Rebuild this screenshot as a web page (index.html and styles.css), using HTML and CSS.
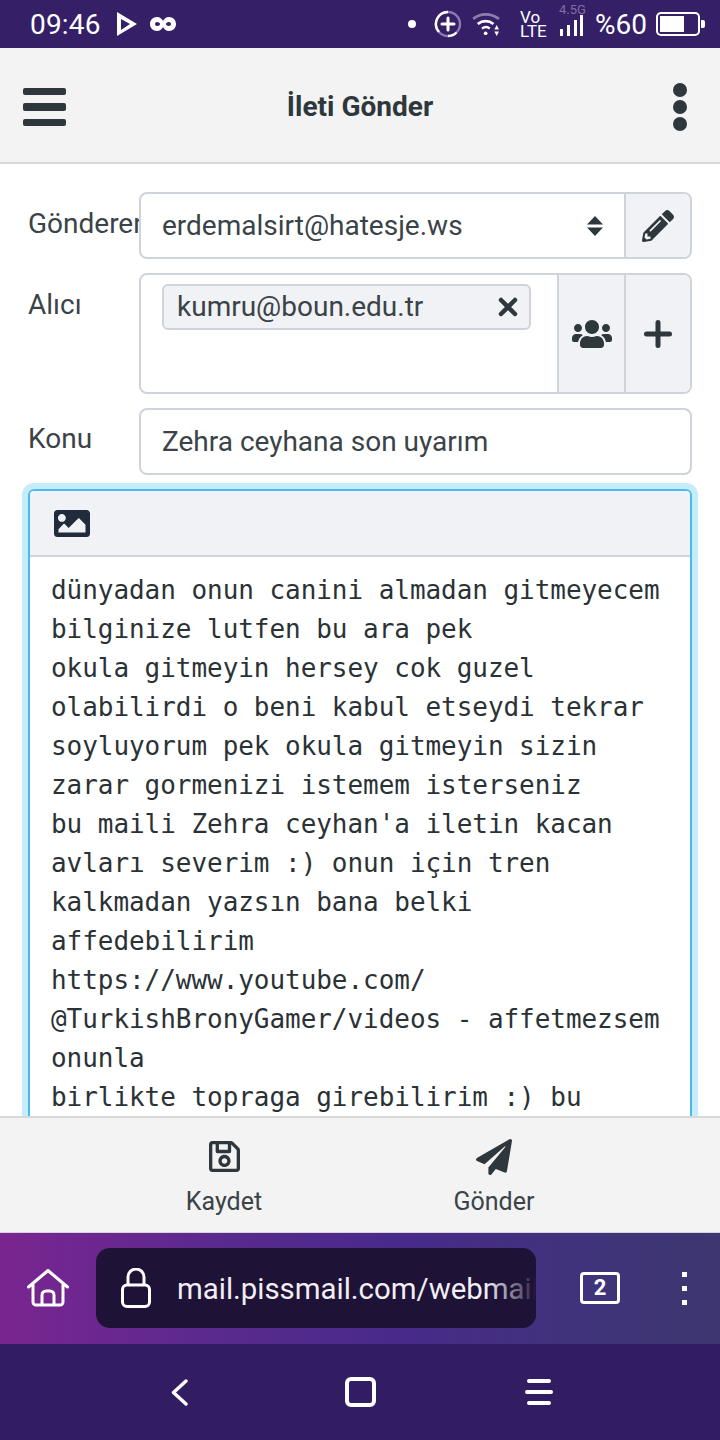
FILE: index.html
```html
<!DOCTYPE html>
<html lang="tr">
<head>
<meta charset="utf-8">
<title>İleti Gönder</title>
<link rel="stylesheet" href="styles.css">
</head>
<body>
<div class="phone">
  <div class="status">
    <span class="time">09:46</span>
    <svg class="st-play" viewBox="0 0 20 24"><path fill-rule="evenodd" d="M0 0 20 12 0 24ZM4 7V18L13 12Z" fill="#fff"/></svg>
    <svg class="st-mask" viewBox="0 0 26 14"><path d="M7 0c3 0 5 2 6 4 1-2 3-4 6-4 4 0 7 3 7 7s-3 7-7 7c-3 0-5-2-6-4-1 2-3 4-6 4-4 0-7-3-7-7s3-7 7-7Zm0 5a2 2 0 1 0 0 4c2 0 3-1 3-2s-1-2-3-2Zm12 0c-2 0-3 1-3 2s1 2 3 2a2 2 0 1 0 0-4Z" fill="#fff"/></svg>
    <span class="spacer"></span>
    <span class="st-dot"></span>
    <svg class="st-plus" viewBox="0 0 28 28"><circle cx="14" cy="14" r="12" fill="none" stroke="#8d7cae" stroke-width="2.4"/><path d="M14 2A12 12 0 0 0 5 22M14 26a12 12 0 0 0 8.500-3.500" fill="none" stroke="#fff" stroke-width="2.400"/><path d="M14 8v12M8 14h12" stroke="#fff" stroke-width="3" stroke-linecap="round"/></svg>
    <svg class="st-wifi" viewBox="0 0 32 26"><path d="M1 7.500C9 1 20 1 29 7.500" fill="none" stroke="#8d7cae" stroke-width="3"/><path d="M6 13c5-4 12-4 17 0" fill="none" stroke="#fff" stroke-width="3"/><path d="M10.500 18c3-2.200 6-2.200 8.500 0" fill="none" stroke="#fff" stroke-width="2.600"/><circle cx="14.500" cy="23" r="2" fill="#fff"/><path d="M24 19h5l-2.500-5ZM24 21h5l-2.500 5Z" fill="#fff"/></svg>
    <span class="st-volte"><span>Vo</span><span>LTE</span></span>
    <span class="st-signal">
      <span class="st-net">4.5G</span>
      <svg class="st-bars" viewBox="0 0 24 21"><path d="M1 14h3v7H1ZM8 10h3v11H8ZM15 5h3v16h-3ZM21 0h3v21h-3Z" fill="#fff"/></svg>
    </span>
    <span class="st-pct">%60</span>
    <svg class="st-batt" viewBox="0 0 49 24"><rect x="1" y="1" width="42" height="22" rx="4" fill="none" stroke="#fff" stroke-width="2"/><rect x="4" y="4" width="24" height="16" fill="#fff"/><path d="M45 8h2a2 2 0 0 1 2 2v4a2 2 0 0 1-2 2h-2Z" fill="#fff"/></svg>
  </div>

  <header class="topbar">
    <div class="burger"><span></span><span></span><span></span></div>
    <h1 class="title">İleti Gönder</h1>
    <div class="kebab"><span></span><span></span><span></span></div>
  </header>

  <main class="form">
    <div class="row">
      <label class="lbl">Gönderen</label>
      <div class="group group-sender">
        <div class="field select-field">
          <span class="val">erdemalsirt@hatesje.ws</span>
          <svg class="sort" viewBox="0 0 16 20"><path d="M8 0 16 8.500H0ZM8 20 0 11.500H16Z" fill="#2e373b"/></svg>
        </div>
        <div class="addon">
          <svg class="ic-pencil" viewBox="0 0 512 512"><path d="M497.9 142.1l-46.1 46.1c-4.7 4.7-12.300 4.700-17 0l-111-111c-4.700-4.700-4.700-12.300 0-17l46.100-46.100c18.700-18.700 49.100-18.700 67.900 0l60.100 60.100c18.800 18.700 18.800 49.100 0 67.900zM284.200 99.800L21.600 362.400.4 483.900c-2.900 16.400 11.400 30.600 27.800 27.800l121.500-21.300 262.600-262.600c4.700-4.700 4.700-12.300 0-17l-111-111c-4.800-4.700-12.400-4.700-17.100 0zM124.100 339.900c-5.500-5.500-5.500-14.300 0-19.800l154-154c5.500-5.500 14.300-5.500 19.800 0s5.500 14.300 0 19.800l-154 154c-5.500 5.500-14.300 5.500-19.800 0zM88 424h48v36.300l-64.500 11.300-31.100-31.100L51.700 376H88v48z" fill="#2e373b"/></svg>
        </div>
      </div>
    </div>

    <div class="row">
      <label class="lbl">Alıcı</label>
      <div class="group group-to">
        <div class="field to-field">
          <div class="tag">
            <span class="tag-text">kumru@boun.edu.tr</span>
            <svg class="ic-x" viewBox="0 0 20 20"><path d="M3 3 17 17M17 3 3 17" stroke="#2e373b" stroke-width="4.500" stroke-linecap="round"/></svg>
          </div>
        </div>
        <div class="addon addon-users">
          <svg class="ic-users" viewBox="0 0 640 512"><path d="M96 224c35.300 0 64-28.700 64-64s-28.700-64-64-64-64 28.700-64 64 28.700 64 64 64zm448 0c35.300 0 64-28.700 64-64s-28.700-64-64-64-64 28.700-64 64 28.700 64 64 64zm32 32h-64c-17.600 0-33.500 7.100-45.100 18.600 40.300 22.100 68.900 62 75.100 109.400h66c17.700 0 32-14.300 32-32v-32c0-35.300-28.700-64-64-64zm-256 0c61.900 0 112-50.100 112-112S381.900 32 320 32 208 82.100 208 144s50.100 112 112 112zm76.800 32h-8.300c-20.800 10-43.900 16-68.500 16s-47.600-6-68.500-16h-8.300C179.600 288 128 339.600 128 403.200V432c0 26.500 21.500 48 48 48h288c26.500 0 48-21.500 48-48v-28.800c0-63.600-51.600-115.200-115.200-115.200zm-223.700-13.400C161.500 263.100 145.600 256 128 256H64c-35.300 0-64 28.700-64 64v32c0 17.700 14.300 32 32 32h65.900c6.300-47.400 34.900-87.300 75.200-109.400z" fill="#2e373b"/></svg>
        </div>
        <div class="addon">
          <svg class="ic-plus" viewBox="0 0 28 28"><path d="M14 2.500v23M2.500 14h23" stroke="#2e373b" stroke-width="5" stroke-linecap="round"/></svg>
        </div>
      </div>
    </div>

    <div class="row">
      <label class="lbl lbl-subject">Konu</label>
      <div class="group group-subject">
        <div class="field"><span class="val">Zehra ceyhana son uyarım</span></div>
      </div>
    </div>

    <div class="editor">
      <div class="toolbar">
        <svg class="ic-image" viewBox="0 0 512 384"><path d="M464 384H48c-26.510 0-48-21.490-48-48V48C0 21.490 21.490 0 48 0h416c26.510 0 48 21.490 48 48v288c0 26.510-21.490 48-48 48zM112 56c-30.928 0-56 25.072-56 56s25.072 56 56 56 56-25.072 56-56-25.072-56-56-56zM64 320h384V208l-87.515-87.515c-4.686-4.686-12.284-4.686-16.971 0L208 256l-55.515-55.515c-4.686-4.686-12.284-4.686-16.971 0L64 272v48z" fill="#212b3b"/></svg>
      </div>
      <div class="body-text">dünyadan onun canini almadan gitmeyecem
bilginize lutfen bu ara pek
okula gitmeyin hersey cok guzel
olabilirdi o beni kabul etseydi tekrar
soyluyorum pek okula gitmeyin sizin
zarar gormenizi istemem isterseniz
bu maili Zehra ceyhan'a iletin kacan
avları severim :) onun için tren
kalkmadan yazsın bana belki
affedebilirim
https://www.youtube.com/
@TurkishBronyGamer/videos - affetmezsem
onunla
birlikte topraga girebilirim :) bu</div>
    </div>
  </main>

  <footer class="actions">
    <div class="action action-save">
      <svg class="ic-save" viewBox="0 0 448 448"><path d="M433.941 97.941l-83.882-83.882A48 48 0 0 0 316.118 0H48C21.490 0 0 21.490 0 48v352c0 26.510 21.490 48 48 48h352c26.510 0 48-21.490 48-48V131.882a48 48 0 0 0-14.059-33.941zM272 48v80H144V48h128zm122 352H54a6 6 0 0 1-6-6V54a6 6 0 0 1 6-6h42v104c0 13.255 10.745 24 24 24h176c13.255 0 24-10.745 24-24V51.882l78.243 78.243a6 6 0 0 1 1.757 4.243V394a6 6 0 0 1-6 6zM224 200c-48.523 0-88 39.477-88 88s39.477 88 88 88 88-39.477 88-88-39.477-88-88-88zm0 128c-22.056 0-40-17.944-40-40s17.944-40 40-40 40 17.944 40 40-17.944 40-40 40z" fill="#2e373b"/></svg>
      <span>Kaydet</span>
    </div>
    <div class="action action-send">
      <svg class="ic-send" viewBox="0 0 512 512"><path d="M476 3.200L12.500 270.600c-18.100 10.400-15.800 35.600 2.200 43.200L121 358.400l287.300-253.200c5.500-4.900 13.300 2.600 8.600 8.300L176 407v80.500c0 23.600 28.500 32.900 42.500 15.800L282 426l124.600 52.200c14.200 6 30.400-2.900 33-18.200l72-432C515 7.800 493.300-6.800 476 3.200z" fill="#2e373b"/></svg>
      <span>Gönder</span>
    </div>
  </footer>

  <div class="browser">
    <svg class="ic-home" viewBox="0 0 42 38"><path d="M1.500 18 21 1.500 40.500 18M6 14.500V33a3 3 0 0 0 3 3h24a3 3 0 0 0 3-3V14.500M15 36V26a4 4 0 0 1 4-4h4a4 4 0 0 1 4 4v10" fill="none" stroke="#fff" stroke-width="3" stroke-linecap="round" stroke-linejoin="round"/></svg>
    <div class="urlbar">
      <svg class="ic-lock" viewBox="0 0 30 40"><rect x="1.500" y="17" width="27" height="21.500" rx="4.500" fill="none" stroke="#fff" stroke-width="3"/><path d="M7 17V9a8 8 0 0 1 16 0v8" fill="none" stroke="#fff" stroke-width="3"/></svg>
      <span class="url">mail.pissmail.com/webmail/</span>
      <span class="fade"></span>
    </div>
    <div class="tabs">2</div>
    <div class="menu"><span></span><span></span><span></span></div>
  </div>

  <nav class="navbar">
    <svg class="nav-back" viewBox="0 0 17 27"><path d="M15 2 2.500 13.500 15 25" fill="none" stroke="#fff" stroke-width="3.400" stroke-linecap="round" stroke-linejoin="round"/></svg>
    <span class="nav-home"></span>
    <div class="nav-menu"><span></span><span></span><span></span></div>
  </nav>
</div>
</body>
</html>
```
FILE: styles.css
```css
* { box-sizing: border-box; }
html, body { margin: 0; padding: 0; }
body { font-family: Roboto, "Noto Sans", sans-serif; color: #2e373b; }
.phone { width: 720px; height: 1440px; display: flex; flex-direction: column; overflow: hidden; background: #fff; }

/* Status bar */
.status { height: 48px; flex: none; background: #351f66; color: #fff; display: flex; align-items: center; padding: 0 15px 0 30px; }
.time { font-size: 28px; letter-spacing: .2px; }
.st-play { width: 20px; height: 24px; margin-left: 16px; }
.st-mask { width: 26px; height: 14px; margin-left: 13px; }
.spacer { flex: 1; }
.st-dot { width: 8px; height: 8px; border-radius: 50%; background: #fff; }
.st-plus { width: 28px; height: 28px; margin-left: 18px; }
.st-wifi { width: 30px; height: 24px; margin-left: 10px; }
.st-volte { display: flex; flex-direction: column; align-items: flex-start; font-size: 17px; line-height: 14px; margin-left: 18px; width: 27px; }
.st-signal { display: flex; flex-direction: column; align-items: flex-start; width: 24px; margin-left: 12px; align-self: flex-start; margin-top: 5px; }
.st-net { font-size: 13px; line-height: 10px; color: #7f6fa2; }
.st-bars { width: 24px; height: 21px; }
.st-pct { font-size: 28px; margin-left: 12px; }
.st-batt { width: 49px; height: 24px; margin-left: 9px; }

/* Header */
.topbar { height: 116px; flex: none; background: #f3f3f3; border-bottom: 2px solid #d5d9dc; display: grid; grid-template-columns: 1fr auto 1fr; align-items: center; padding: 4px 23px 0; }
.burger { width: 43px; display: flex; flex-direction: column; gap: 8px; }
.burger span { height: 7.500px; background: #2e373b; border-radius: 2px; }
.title { margin: 0; font-size: 28px; font-weight: 700; line-height: 32px; color: #2e373b; }
.kebab { display: flex; flex-direction: column; gap: 3px; justify-self: end; margin-right: 10px; }
.kebab span { width: 14px; height: 14px; border-radius: 50%; background: #2e373b; }

/* Form */
.form { flex: 1; min-height: 0; overflow: hidden; padding: 28px 28px 0; display: flex; flex-direction: column; gap: 14px; }
.row { display: flex; flex: none; }
.lbl { width: 111px; flex: none; font-size: 28px; line-height: 32px; white-space: nowrap; overflow: hidden; color: #3a4348; padding-top: 16px; }
.lbl-subject { padding-top: 15px; }
.group { flex: 1; display: flex; border: 2px solid #ced4da; border-radius: 8px; overflow: hidden; }
.group-sender, .group-subject { height: 67px; }
.group-to { height: 121px; }
.field { flex: 1; display: flex; align-items: center; padding: 0 21px 0 21px; font-size: 28px; color: #3a4348; }
.val { line-height: 32px; }
.select-field { justify-content: space-between; }
.sort { width: 16px; height: 20px; }
.addon { width: 66px; flex: none; background: #f0f2f5; border-left: 2px solid #ced4da; display: flex; align-items: center; justify-content: center; }
.ic-pencil { width: 32px; height: 32px; }
.to-field { align-items: flex-start; padding-top: 9px; }
.tag { flex: 1; height: 46px; margin-right: 5px; background: #f0f2f5; border: 2px solid #ced4da; border-radius: 6px; display: flex; align-items: center; justify-content: space-between; padding: 0 11px 0 13px; }
.tag-text { margin-top: -2px; }
.ic-x { width: 20px; height: 20px; }
.ic-users { width: 40px; height: 32px; }
.ic-plus { width: 28px; height: 28px; }
.addon-users { width: 67px; }

/* Editor */
.editor { flex: none; border: 2px solid #4db8ee; border-radius: 6px 6px 0 0; box-shadow: 0 0 0 6px #c5ecfb; }
.toolbar { height: 66px; background: #f0f2f5; border-bottom: 2px solid #ced4da; display: flex; align-items: center; padding: 0 0 0 24px; border-radius: 4px 4px 0 0; }
.ic-image { width: 36px; height: 27px; }
.body-text { padding: 14px 21px 0; font-family: "DejaVu Sans Mono", "Liberation Mono", monospace; font-size: 26px; letter-spacing: -.05px; line-height: 39px; white-space: pre; color: #2b3236; }

/* Footer actions */
.actions { height: 116px; flex: none; background: #f3f3f3; border-top: 2px solid #d5d9dc; display: flex; }
.action { display: flex; flex-direction: column; align-items: center; font-size: 25px; line-height: 32px; color: #3a4348; }
.action-save { width: 100px; margin-left: 174px; padding-top: 23px; }
.action-send { width: 100px; margin-left: 170px; padding-top: 21px; }
.ic-save { width: 31px; height: 31px; margin-bottom: 14px; }
.ic-send { width: 36px; height: 36px; margin-bottom: 11px; }

/* Browser bar */
.browser { height: 112px; flex: none; border-top: 1px solid #d8d2de; background: linear-gradient(90deg, #7a2590 0%, #5a2a8e 30%, #482a8a 55%, #3f3478 85%, #3d3670 100%); display: flex; align-items: center; padding: 0 0 1px 27px; }
.ic-home { width: 42px; height: 38px; flex: none; }
.urlbar { width: 440px; height: 80px; flex: none; margin-left: 27px; background: #1e1236; border-radius: 14px; display: flex; align-items: center; padding-left: 25px; overflow: hidden; position: relative; }
.ic-lock { width: 30px; height: 40px; flex: none; }
.url { margin-left: 26px; padding-top: 2px; font-size: 29.400px; color: #f1eff4; white-space: nowrap; }
.fade { position: absolute; right: 0; top: 0; bottom: 0; width: 50px; background: linear-gradient(90deg, rgba(30,18,54,0), rgba(30,18,54,.75) 80%, #1e1236); }
.tabs { width: 40px; height: 32px; flex: none; margin-left: 44px; border: 3px solid #fff; border-radius: 4px; color: #fff; font-size: 22px; font-weight: 700; line-height: 26px; text-align: center; }
.menu { display: flex; flex-direction: column; gap: 9px; margin-left: 62px; }
.menu span { width: 5px; height: 5px; background: #fff; }

/* Nav bar */
.navbar { height: 96px; flex: none; background: #331d62; display: flex; align-items: center; justify-content: center; padding-left: 3px; }
.nav-back { width: 17px; height: 27px; margin-right: 157px; }
.nav-home { width: 31px; height: 30px; border: 4px solid #fff; border-radius: 6px; }
.nav-menu { width: 28px; margin-left: 149px; display: flex; flex-direction: column; align-items: center; gap: 6.500px; }
.nav-menu span { height: 4.500px; width: 24px; background: #fff; border-radius: 2px; }
.nav-menu span:nth-child(2) { width: 28px; }
```
